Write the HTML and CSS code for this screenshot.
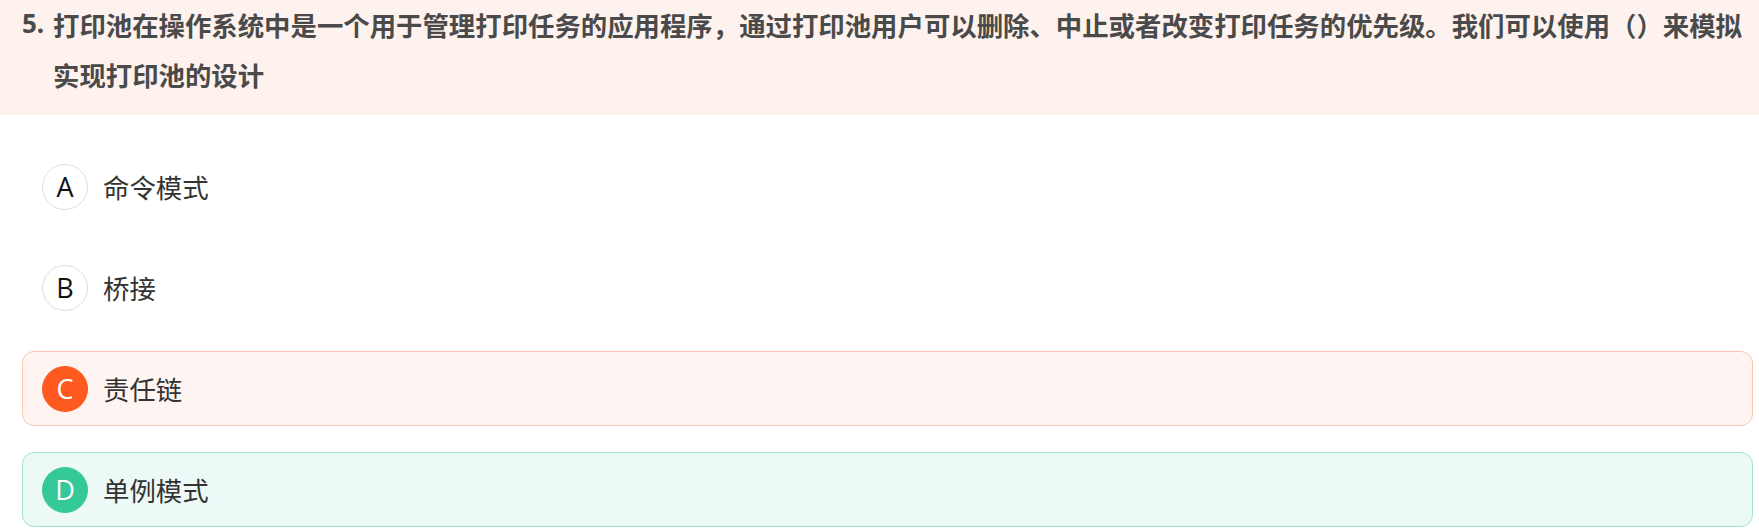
FILE: index.html
```html
<!DOCTYPE html>
<html lang="zh-CN">
<head>
<meta charset="utf-8">
<title>题目 5</title>
<link rel="stylesheet" href="styles.css">
</head>
<body>
<div class="question">
  <div class="q-head">
    <span class="q-num">5.</span>
    <div class="q-text">打印池在操作系统中是一个用于管理打印任务的应用程序，通过打印池用户可以删除、中止或者改变打印任务的优先级。我们可以使用（）来模拟实现打印池的设计</div>
  </div>
  <div class="options">
    <div class="option">
      <span class="badge">A</span>
      <span class="opt-text">命令模式</span>
    </div>
    <div class="option">
      <span class="badge">B</span>
      <span class="opt-text">桥接</span>
    </div>
    <div class="option option-wrong">
      <span class="badge">C</span>
      <span class="opt-text">责任链</span>
    </div>
    <div class="option option-right">
      <span class="badge">D</span>
      <span class="opt-text">单例模式</span>
    </div>
  </div>
</div>
</body>
</html>
```
FILE: styles.css
```css
html, body {
  margin: 0;
  padding: 0;
  background: #ffffff;
}

body {
  font-family: "Noto Sans", "Noto Sans CJK SC", sans-serif;
  color: #333333;
}

.q-head {
  display: flex;
  align-items: flex-start;
  background: #fef2ee;
  padding: 0 6px 16px 22px;
  font-size: 26.4px;
  line-height: 49.5px;
  font-weight: 700;
  color: #4a4a4a;
}

.q-num {
  flex: none;
  width: 31px;
  font-family: "Noto Sans", sans-serif;
  font-size: 26px;
  line-height: 46px;
}

.q-text {
  flex: 1;
  font-family: "Noto Sans CJK SC", sans-serif;
}

.options {
  display: flex;
  flex-direction: column;
  gap: 26px;
  padding: 34px 6px 0 22px;
}

.option {
  display: flex;
  align-items: center;
  height: 75px;
  box-sizing: border-box;
  padding: 0 19px;
  border: 1px solid transparent;
  border-radius: 12px;
}

.badge {
  flex: none;
  width: 46px;
  height: 46px;
  box-sizing: border-box;
  border: 1px solid #dedede;
  border-radius: 50%;
  display: flex;
  align-items: center;
  justify-content: center;
  font-family: "Open Sans", "Noto Sans", sans-serif;
  font-size: 27px;
  line-height: 1;
  color: #111111;
  margin-right: 15px;
}

.opt-text {
  font-family: "Noto Sans CJK SC", sans-serif;
  font-size: 26.4px;
  color: #333333;
}

.option-wrong {
  background: #fef4f1;
  border-color: #fbc4b2;
}

.option-wrong .badge {
  background: #fe5a1f;
  border-color: #fe5a1f;
  color: #ffffff;
}

.option-right {
  background: #edf9f6;
  border-color: #9fe4cb;
}

.option-right .badge {
  background: #35c99a;
  border-color: #35c99a;
  color: #ffffff;
}
```
